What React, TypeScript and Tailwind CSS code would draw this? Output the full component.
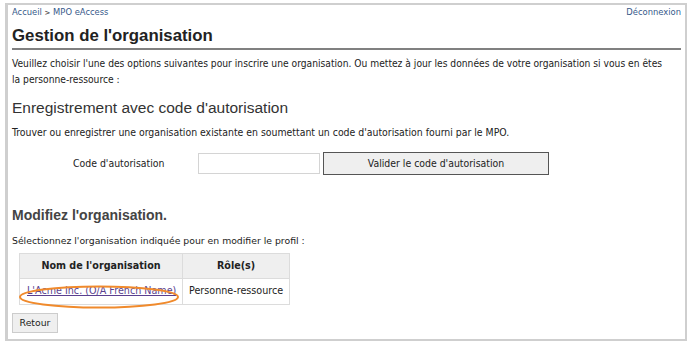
import React from "react";

const tahoma = { fontFamily: '"DejaVu Sans Condensed", "Liberation Sans", sans-serif' };
const verdana = { fontFamily: '"DejaVu Sans", Verdana, sans-serif' };
const arial = { fontFamily: '"Liberation Sans", Arial, sans-serif' };

export default function App() {
  return (
    <div className="w-[700px] h-[347px] bg-white pt-[3px] pl-[5px]">
      <div className="w-[682px] h-[338px] border-[2px] border-[#cfcfcf] border-l-[3px] px-[4px]">
        <div className="flex justify-between items-center h-[14px] text-[8.4px] text-[#444]" style={verdana}>
          <div className="text-[#36598a]">
            Accueil <span className="text-[#555] text-[7px] font-bold">&gt;</span> MPO eAccess
          </div>
          <div className="text-[#36598a]">Déconnexion</div>
        </div>
        <h1 className="text-[16.8px] font-bold text-[#222] leading-[22px] mt-[6px] pb-[1px] border-b-[2px] border-[#808080]" style={arial}>
          Gestion de l'organisation
        </h1>
        <p className="text-[10.2px] leading-[16px] text-[#222] mt-[6px]" style={tahoma}>
          Veuillez choisir l'une des options suivantes pour inscrire une organisation. Ou mettez à jour les données de votre organisation si vous en êtes
          <br />
          la personne-ressource :
        </p>
        <h2 className="text-[15.5px] text-[#333] leading-[20px] mt-[10px]" style={arial}>
          Enregistrement avec code d'autorisation
        </h2>
        <p className="text-[10.4px] leading-[16px] text-[#222] mt-[6px]" style={tahoma}>
          Trouver ou enregistrer une organisation existante en soumettant un code d'autorisation fourni par le MPO.
        </p>
        <div className="flex items-center mt-[12px]" style={tahoma}>
          <div className="w-[186px] pl-[61px] text-[10.4px] text-[#222]">Code d'autorisation</div>
          <input className="w-[122px] h-[21px] border border-[#d4d4d4] bg-white" />
          <button className="ml-[3px] w-[226px] h-[23px] border border-[#555] bg-[#efefef] text-[10.4px] text-[#222]" style={tahoma}>
            Valider le code d'autorisation
          </button>
        </div>
        <h2 className="text-[14px] font-bold text-[#444] leading-[20px] mt-[30px]" style={arial}>
          Modifiez l'organisation.
        </h2>
        <p className="text-[9.3px] leading-[14px] text-[#222] mt-[9px]" style={verdana}>
          Sélectionnez l'organisation indiquée pour en modifier le profil :
        </p>
        <table className="ml-[7px] mt-[5px] border-collapse text-[9.6px] text-[#222] whitespace-nowrap" style={verdana}>
          <thead>
            <tr className="bg-[#efefef]">
              <th className="border border-[#dcdcdc] h-[25px] w-[163px] font-bold">Nom de l'organisation</th>
              <th className="border border-[#dcdcdc] h-[25px] w-[106px] font-bold">Rôle(s)</th>
            </tr>
          </thead>
          <tbody>
            <tr>
              <td className="border border-[#dcdcdc] h-[26px] pl-[7px] pr-[4px] relative">
                <span className="text-[#5a3f8f] underline">L'Acme Inc. (O/A French Name)</span>
                <svg className="absolute left-[-2px] top-[4px]" width="162" height="26" viewBox="0 0 162 26">
                  <ellipse cx="81" cy="14" rx="79" ry="10.5" fill="none" stroke="#f08a2c" strokeWidth="2" />
                </svg>
              </td>
              <td className="border border-[#dcdcdc] h-[26px] px-[6px]">Personne-ressource</td>
            </tr>
          </tbody>
        </table>
        <button className="mt-[8px] h-[20px] w-[46px] border border-[#ccc] bg-[#efefef] text-[9.3px] text-[#222]" style={verdana}>
          Retour
        </button>
      </div>
    </div>
  );
}
